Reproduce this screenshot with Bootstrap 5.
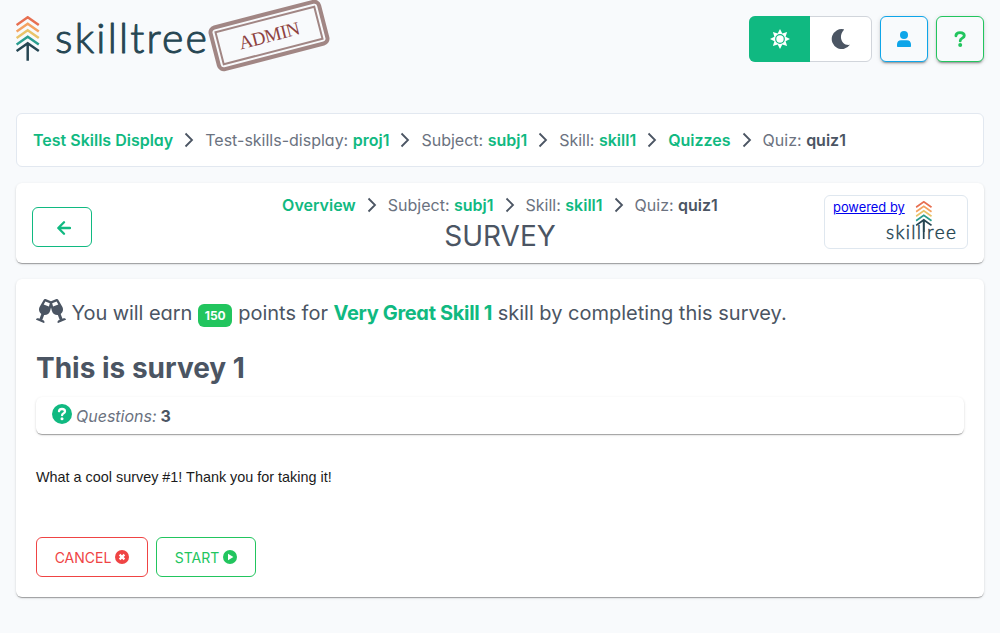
<!DOCTYPE html>
<html lang="en">
<head>
<meta charset="utf-8">
<meta name="viewport" content="width=device-width, initial-scale=1">
<title>SkillTree - Survey</title>
<link href="https://cdn.jsdelivr.net/npm/bootstrap@5.3.0/dist/css/bootstrap.min.css" rel="stylesheet">
<style>
body{background:#f8fafc;color:#4b5563;font-family:Inter,"Noto Sans",sans-serif;font-feature-settings:"cv11";line-height:24px;min-height:100vh}
svg{display:block;flex:none}
a{text-decoration:none}
.brand-area{height:97px}
.stamp{width:116px;height:47px;border:4px solid #a18684;border-radius:7px;padding:2px;transform:rotate(-14.5deg);margin:12px 0 0 3px}
.stamp-inner{border:2px solid #a18684;height:100%;font:19px/31px "Liberation Serif",serif;color:#8e4341;letter-spacing:-.5px}
.mode-switch{width:123px;height:46px;border:1px solid #d1d5db;border-radius:6px;background:#fff}
.mode-on{background:#10b981;width:61px;margin:-1px 0 -1px -1px;border-radius:6px 0 0 6px}
.tool-btn{width:48px;height:46px;border:1px solid;border-radius:6px;box-shadow:0 3px 1px -2px rgba(0,0,0,.2),0 2px 2px rgba(0,0,0,.14),0 1px 5px rgba(0,0,0,.12);background:#f8fafc}
.tone-sky{color:#0ea5e9}.tone-lime{color:#22c55e}.tone-red{color:#ef4444}
.trail{color:#6b7280;font-size:16px;white-space:nowrap}
.trail a,.trail b{font-weight:600}
.trail a{color:#10b981}.trail b{color:#4b5563}
.trail svg{margin:0 11px}
.crumb-box{height:54px;border:1px solid #e2e8f0;border-radius:6px;background:#fff;padding:0 16px}
.panel{background:#fff;border-radius:6px;box-shadow:0 2px 1px -1px rgba(0,0,0,.2),0 1px 1px rgba(0,0,0,.14),0 1px 3px rgba(0,0,0,.12)}
.title-panel{height:80px;padding:0 16px}
.title-side{width:144px}
.title-mid{padding-top:10px}
.back-btn{width:60px;height:40px;border:1px solid #10b981;border-radius:6px;margin-top:24px;padding:1px 0 0 4px}
.page-title{font-size:28px;line-height:38px;font-weight:400}
.powered{height:54px;border:1px solid #dfe7ef;border-radius:6px;margin-top:12px}
.powered a{font-size:12.9px;line-height:23px;color:#00e;text-decoration:underline}
.survey-panel{height:318px;padding:20px}
.earn{font-size:20px;line-height:28px;white-space:pre}
.earn a{color:#10b981;font-weight:700;letter-spacing:-.33px}
.earn-lead{padding-left:1.500px;letter-spacing:-.07px}
.points{background:#22c55e;color:#fff;font-size:12px;font-weight:700;line-height:23px;height:23px;width:34px;border-radius:6px;margin:5px 6px 0}
.survey-name{font-size:28px;line-height:36px;font-weight:700;margin:23px 0 11px}
.count-box{height:37px;padding:0 16px}
.count-label{color:#6b7280}
.description{font:14.4px/22px "Liberation Sans",sans-serif;color:#1b1b1b;margin:32px 0 49px}
.act{height:40px;border:1px solid;border-radius:6px;font-size:14px;background:#fff;padding:0}
.act span{padding-top:2px}
.act-cancel{width:112px}.act-start{width:100px}
</style>
<script src="https://cdn.jsdelivr.net/npm/bootstrap@5.3.0/dist/js/bootstrap.bundle.min.js"></script>
</head>
<body>
<svg width="0" height="0" class="position-absolute">
<symbol id="chev" viewBox="0 0 10 16"><path d="M1.500 1.500 8 8l-6.500 6.500" fill="none" stroke="#4b5563" stroke-width="1.800"/></symbol>
<symbol id="tree" viewBox="0 0 24 46"><g fill="none" stroke-width="2.500"><path d="M.6 9.300 11.700 1.500 22.800 9.300" stroke="#e76f51"/><path d="M.6 15.800 11.700 8 22.800 15.800" stroke="#f4a261"/><path d="M.6 22.300 11.700 14.500 22.800 22.300" stroke="#e9c46a"/><path d="M.6 28.800 11.700 21 22.800 28.800" stroke="#2a9d8f"/><path d="M.6 35.300 11.700 27.500 22.800 35.300M11.700 28V45" stroke="#264653"/></g></symbol>
</svg>
<div class="px-3">
<header class="brand-area d-flex justify-content-between">
  <div class="d-flex">
    <svg width="192" height="66" viewBox="0 0 192 66"><use href="#tree" x="0" y="15.800" width="24" height="46"/><text x="39" y="53.300" textLength="152" font-family="Lato" font-weight="300" font-size="41" fill="#264653" stroke="#264653" stroke-width="1" stroke-linejoin="round">skilltree</text></svg>
    <div class="stamp"><div class="stamp-inner text-center">ADMIN</div></div>
  </div>
  <div class="d-flex gap-2 mt-3">
    <div class="mode-switch d-flex">
      <div class="mode-on d-flex align-items-center justify-content-center"><svg width="20" height="20" viewBox="0 0 20 20"><path d="M10 0l2.300 4.400L17.100 2.900 15.600 7.700 20 10l-4.400 2.300 1.500 4.800-4.800-1.500L10 20l-2.300-4.400-4.800 1.500 1.500-4.800L0 10l4.400-2.300L2.900 2.900l4.800 1.500z" fill="#fff"/><circle cx="10" cy="10" r="4.300" fill="#fff" stroke="#10b981" stroke-width="1.200"/></svg></div>
      <div class="flex-fill d-flex align-items-center justify-content-center"><svg width="20" height="20" viewBox="0 0 20 20"><path d="M12.500.2A10 10 0 1 0 18.900 15.800C11.500 17 6.500 8 12.800.9c.4-.4.1-.7-.3-.7z" fill="#4b5563"/></svg></div>
    </div>
    <div class="tool-btn tone-sky d-flex align-items-center justify-content-center"><svg width="14" height="16" viewBox="0 0 14 16" fill="currentColor"><circle cx="7" cy="4" r="4"/><path d="M0 13.500C0 10.800 1.700 9.300 4 9.300h6c2.300 0 4 1.500 4 4.200V15c0 .6-.4 1-1 1H1c-.6 0-1-.4-1-1z"/></svg></div>
    <div class="tool-btn tone-lime d-flex align-items-center justify-content-center"><svg width="12" height="16" viewBox="0 0 12 16"><path d="M1.900 4.900C2 2.500 3.800 1.600 6 1.600c2.500 0 4.300 1 4.300 3.100C10.300 7.200 6.200 7.200 6.200 9.900" fill="none" stroke="currentColor" stroke-width="2.800" stroke-linecap="round"/><circle cx="6.200" cy="14" r="2" fill="currentColor"/></svg></div>
  </div>
</header>
<main>
  <nav class="crumb-box trail d-flex align-items-center mt-3">
    <a href="#">Test Skills Display</a><svg width="10" height="16"><use href="#chev"/></svg>
    <span>Test-skills-display: <a href="#">proj1</a></span><svg width="10" height="16"><use href="#chev"/></svg>
    <span>Subject: <a href="#">subj1</a></span><svg width="10" height="16"><use href="#chev"/></svg>
    <span>Skill: <a href="#">skill1</a></span><svg width="10" height="16"><use href="#chev"/></svg>
    <a href="#">Quizzes</a><svg width="10" height="16"><use href="#chev"/></svg>
    <span>Quiz: <b>quiz1</b></span>
  </nav>
  <section class="panel title-panel d-flex justify-content-between mt-3">
    <div class="title-side"><a href="#" class="back-btn d-flex align-items-center justify-content-center"><svg width="14" height="14" viewBox="0 0 14 14"><path d="M7 1.300 1.300 7 7 12.700M1.500 7H13" fill="none" stroke="#10b981" stroke-width="2.300" stroke-linecap="round" stroke-linejoin="round"/></svg></a></div>
    <div class="title-mid text-center">
      <nav class="trail d-flex align-items-center">
        <a href="#">Overview</a><svg width="10" height="16"><use href="#chev"/></svg>
        <span>Subject: <a href="#">subj1</a></span><svg width="10" height="16"><use href="#chev"/></svg>
        <span>Skill: <a href="#">skill1</a></span><svg width="10" height="16"><use href="#chev"/></svg>
        <span>Quiz: <b>quiz1</b></span>
      </nav>
      <h1 class="page-title mb-0">SURVEY</h1>
    </div>
    <div class="title-side"><div class="powered d-flex ps-2">
      <a href="#">powered by</a>
      <svg class="overflow-visible" width="1" height="52"><use href="#tree" x="10.500" y="4.800" width="17" height="32"/><path d="M18.700 24V43" stroke="#264653" stroke-width="1.700"/><g font-family="Lato" font-size="19" fill="#264653" font-weight="300" stroke="#264653" stroke-width=".45"><text x="-19" y="43" textLength="35">skill</text><text x="22" y="43" textLength="29">ree</text></g></svg>
    </div></div>
  </section>
  <section class="panel survey-panel mt-3">
    <div class="earn d-flex"><svg class="me-1" width="30" height="24" viewBox="0 0 640 512" fill="#4b5563"><path d="M639.4 433.600c-8.400-20.400-31.800-30.100-52.200-21.600l-22.100 9.200-38.700-101.900c47.900-35 64.800-100.300 34.500-152.800L474.300 16c-8-13.900-25.100-19.700-40-13.600L320 49.800 205.700 2.400c-14.900-6.200-32-.3-40 13.600L79.100 166.500C48.900 219 65.700 284.300 113.600 319.200L74.900 421.100l-22.100-9.200c-20.400-8.500-43.700 1.200-52.200 21.600-1.700 4.100.2 8.800 4.300 10.500l162.300 67.400c4.100 1.700 8.700-.2 10.400-4.300 8.400-20.400-1.200-43.800-21.600-52.300l-22.100-9.200L173.300 342c4.400.5 8.800 1.300 13.100 1.300 51.700 0 99.400-33.100 113.400-85.300l20.200-75.400 20.200 75.400c14 52.200 61.700 85.300 113.400 85.300 4.300 0 8.700-.8 13.100-1.300L506 445.600l-22.100 9.200c-20.400 8.500-30 31.900-21.600 52.300 1.700 4.100 6.300 6 10.400 4.300L635.100 444c4-1.700 6-6.300 4.300-10.400zM275.900 162.100l-112.100-46.500 36.500-63.400 94.500 39.200-18.900 70.700zm88.200 0l-18.900-70.700 94.500-39.200 36.500 63.400-112.100 46.500z"/></svg><span class="earn-lead">You will earn</span><span class="points text-center">150</span><span>points for <a href="#">Very Great Skill 1</a> skill by completing this survey.</span></div>
    <h2 class="survey-name">This is survey 1</h2>
    <div class="panel count-box d-flex align-items-center">
      <svg class="mb-1" width="20" height="20" viewBox="0 0 20 20"><circle cx="10" cy="10" r="10" fill="#10b981"/><path d="M7 7.200C7.300 5.500 8.500 5 10 5c1.800 0 3 .8 3 2.400 0 1.900-2.900 2.100-2.900 3.800" fill="none" stroke="#fff" stroke-width="2.300" stroke-linecap="round"/><circle cx="10" cy="14.800" r="1.500" fill="#fff"/></svg>
      <span class="count-label fst-italic ms-1 me-1 ps-px">Questions:</span><b>3</b>
    </div>
    <p class="description">What a cool survey #1! Thank you for taking it!</p>
    <div class="d-flex gap-2">
      <button class="act act-cancel tone-red d-flex align-items-center justify-content-center gap-1"><span>CANCEL</span><svg width="14" height="14" viewBox="0 0 14 14"><circle cx="7" cy="7" r="7" fill="currentColor"/><path d="M4.600 4.600l4.800 4.800m0-4.800L4.600 9.400" stroke="#fff" stroke-width="2.200"/></svg></button>
      <button class="act act-start tone-lime d-flex align-items-center justify-content-center gap-1"><span>START</span><svg width="14" height="14" viewBox="0 0 14 14"><circle cx="7" cy="7" r="7" fill="currentColor"/><path d="M5 3.800v6.400L10.400 7z" fill="#fff"/></svg></button>
    </div>
  </section>
</main>
</div>
</body>
</html>
